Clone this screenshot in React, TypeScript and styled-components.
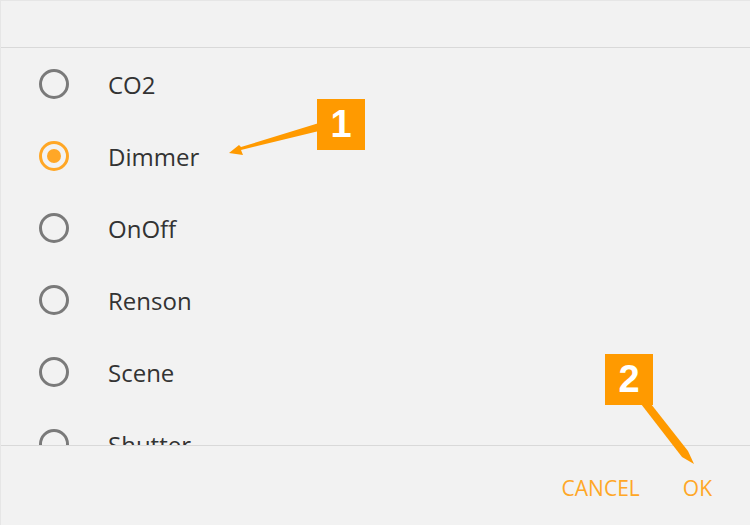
import styled, { createGlobalStyle } from 'styled-components';

const GlobalStyle = createGlobalStyle`
  html, body {
    margin: 0;
    padding: 0;
    background: #f2f2f2;
    font-family: "Open Sans", "Noto Sans", sans-serif;
  }
`;

const Dialog = styled.div`
  position: relative;
  width: 750px;
  height: 525px;
  background: #f2f2f2;
  display: flex;
  flex-direction: column;
  box-sizing: border-box;
  border-top: 1px solid #e6e6e6;
  border-left: 1px solid #e6e6e6;
  overflow: hidden;
`;

const Header = styled.div`
  height: 46px;
  flex-shrink: 0;
  border-bottom: 1px solid #d9d9d9;
`;

const List = styled.div`
  height: 397px;
  flex-shrink: 0;
  overflow-y: scroll;

  &::-webkit-scrollbar {
    width: 12px;
  }
  &::-webkit-scrollbar-track {
    background: transparent;
  }
  &::-webkit-scrollbar-thumb {
    background: #a3a3a3;
    border-radius: 6px;
  }
`;

const Row = styled.label`
  height: 72px;
  display: flex;
  align-items: center;
  padding-left: 38px;
  gap: 39px;
  cursor: pointer;
`;

const Radio = styled.span<{ $checked?: boolean }>`
  width: 30px;
  height: 30px;
  flex-shrink: 0;
  box-sizing: border-box;
  border-radius: 50%;
  border: 3px solid ${p => (p.$checked ? '#ffa726' : '#7a7a7a')};
  display: flex;
  align-items: center;
  justify-content: center;

  &::after {
    content: '';
    display: ${p => (p.$checked ? 'block' : 'none')};
    width: 14px;
    height: 14px;
    border-radius: 50%;
    background: #ffa726;
  }
`;

const Label = styled.span`
  font-size: 24px;
  color: #333333;
`;

const Footer = styled.div`
  flex: 1;
  border-top: 1px solid #d9d9d9;
  display: flex;
  align-items: center;
  justify-content: flex-end;
  gap: 43px;
  padding: 4px 38px 0 0;
`;

const FooterButton = styled.button`
  background: none;
  border: none;
  padding: 0;
  font-family: "Open Sans", "Noto Sans", sans-serif;
  font-size: 21px;
  color: #ffa726;
  cursor: pointer;
`;

const Callout = styled.div<{ $x: number; $y: number }>`
  position: absolute;
  left: ${p => p.$x}px;
  top: ${p => p.$y}px;
  width: 48px;
  height: 51px;
  background: #ff9a00;
  color: #ffffff;
  font-family: "Liberation Sans", Arial, sans-serif;
  font-weight: 700;
  font-size: 38px;
  display: flex;
  align-items: center;
  justify-content: center;
`;

const Overlay = styled.svg`
  position: absolute;
  left: 0;
  top: 0;
  pointer-events: none;
`;

const items = [
  'CO2',
  'Dimmer',
  'OnOff',
  'Renson',
  'Scene',
  'Shutter',
  'Temperature',
  'Thermostat',
  'Ventilation',
  'Weather',
];

export default function App() {
  return (
    <>
      <GlobalStyle />
      <Dialog>
        <Header />
        <List>
          {items.map(name => (
            <Row key={name}>
              <Radio $checked={name === 'Dimmer'} />
              <Label>{name}</Label>
            </Row>
          ))}
        </List>
        <Footer>
          <FooterButton>CANCEL</FooterButton>
          <FooterButton>OK</FooterButton>
        </Footer>

        <Overlay width="750" height="525" viewBox="0 0 750 525">
          <polygon points="318,122 318,130 240,149 242,154 228,152 238,144 240,146" fill="#ff9a00" />
          <polygon points="640,403 650,403 687,450 693,463 681,456" fill="#ff9a00" />
        </Overlay>
        <Callout $x={316} $y={98}>1</Callout>
        <Callout $x={604} $y={353}>2</Callout>
      </Dialog>
    </>
  );
}
